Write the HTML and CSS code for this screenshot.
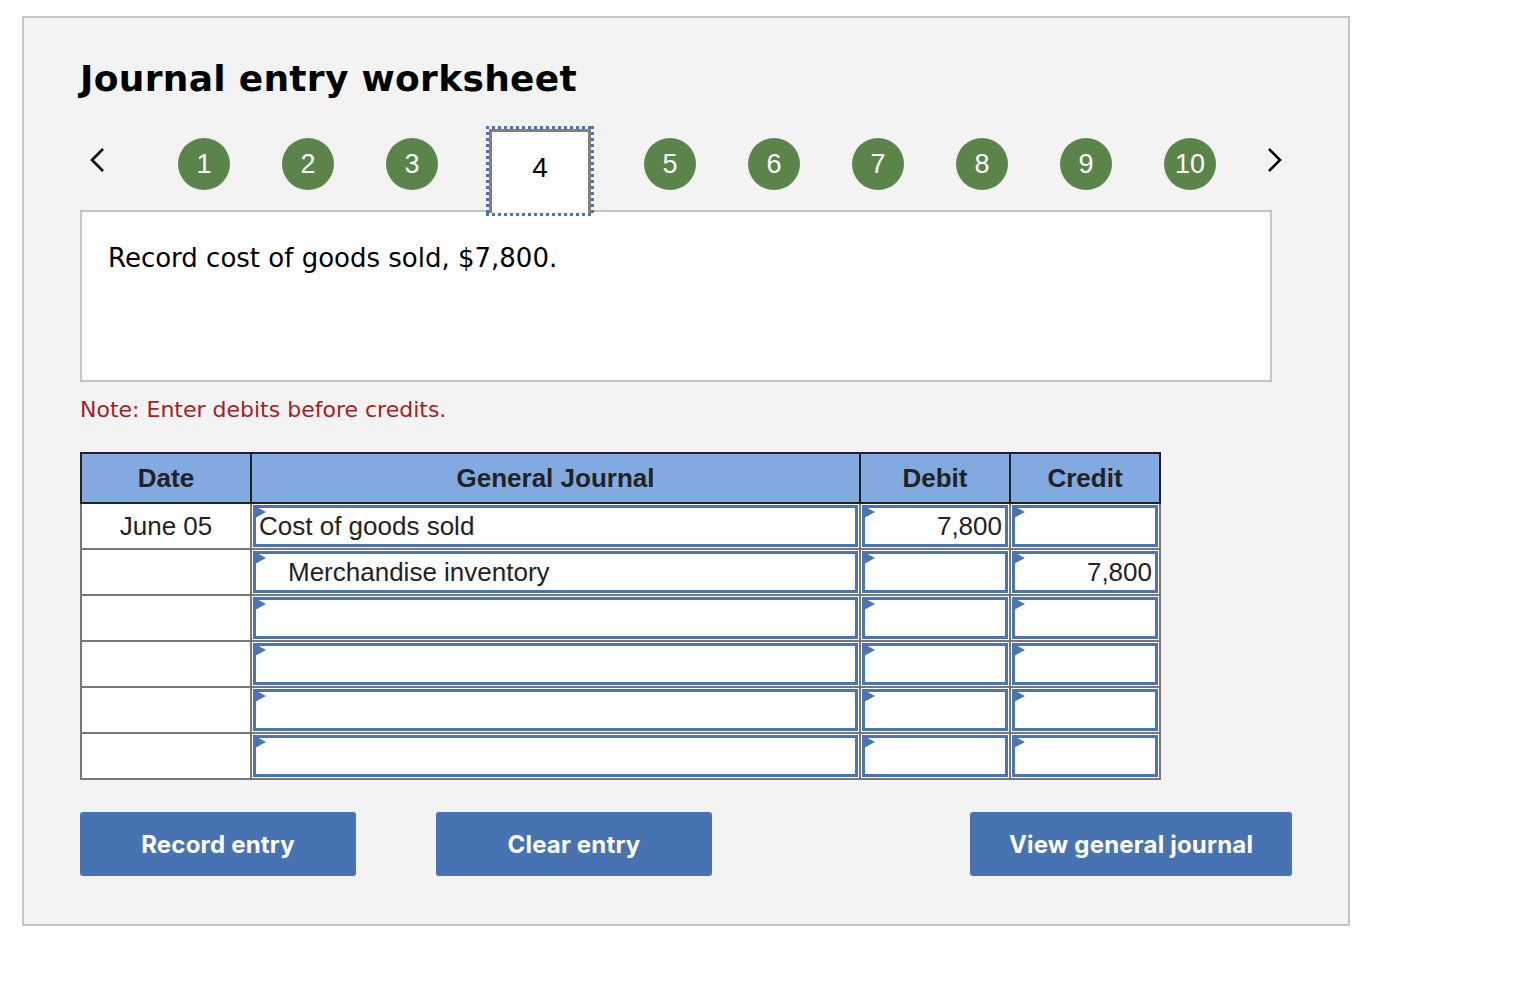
FILE: index.html
```html
<!DOCTYPE html>
<html>
<head>
<meta charset="utf-8">
<title>Journal entry worksheet</title>
<link rel="stylesheet" href="styles.css">
</head>
<body>
<div class="panel">
  <h1 class="title">Journal entry worksheet</h1>
  <div class="nav">
    <span class="chev chev-left"><svg width="18" height="26" viewBox="0 0 18 26"><path d="M15 2 L4 13 L15 24" fill="none" stroke="#000" stroke-width="2.6"/></svg></span>
    <span class="step">1</span>
    <span class="step">2</span>
    <span class="step step-before">3</span>
    <span class="step-current"><span class="step-inner">4</span></span>
    <span class="step">5</span>
    <span class="step">6</span>
    <span class="step">7</span>
    <span class="step">8</span>
    <span class="step">9</span>
    <span class="step step-last">10</span>
    <span class="chev chev-right"><svg width="18" height="26" viewBox="0 0 18 26"><path d="M3 2 L14 13 L3 24" fill="none" stroke="#000" stroke-width="2.6"/></svg></span>
  </div>
  <div class="question">Record cost of goods sold, $7,800.</div>
  <p class="note">Note: Enter debits before credits.</p>
  <table class="journal">
    <thead>
      <tr>
        <th class="c-date">Date</th>
        <th class="c-acct">General Journal</th>
        <th class="c-num">Debit</th>
        <th class="c-num">Credit</th>
      </tr>
    </thead>
    <tbody>
      <tr>
        <td class="date">June 05</td>
        <td><div class="field">Cost of goods sold</div></td>
        <td><div class="field num">7,800</div></td>
        <td><div class="field num"></div></td>
      </tr>
      <tr>
        <td class="date"></td>
        <td><div class="field indent">Merchandise inventory</div></td>
        <td><div class="field num"></div></td>
        <td><div class="field num">7,800</div></td>
      </tr>
      <tr>
        <td class="date"></td>
        <td><div class="field"></div></td>
        <td><div class="field num"></div></td>
        <td><div class="field num"></div></td>
      </tr>
      <tr>
        <td class="date"></td>
        <td><div class="field"></div></td>
        <td><div class="field num"></div></td>
        <td><div class="field num"></div></td>
      </tr>
      <tr>
        <td class="date"></td>
        <td><div class="field"></div></td>
        <td><div class="field num"></div></td>
        <td><div class="field num"></div></td>
      </tr>
      <tr>
        <td class="date"></td>
        <td><div class="field"></div></td>
        <td><div class="field num"></div></td>
        <td><div class="field num"></div></td>
      </tr>
    </tbody>
  </table>
  <div class="actions">
    <button class="btn btn-record">Record entry</button>
    <button class="btn btn-clear">Clear entry</button>
    <button class="btn btn-view">View general journal</button>
  </div>
</div>
</body>
</html>
```

FILE: styles.css
```css
html, body {
  margin: 0;
  padding: 0;
  background: #ffffff;
}

.panel {
  box-sizing: border-box;
  margin: 16px 0 0 22px;
  width: 1328px;
  height: 910px;
  border: 2px solid #c4c4c4;
  background: #f3f3f3;
  padding: 0 0 0 56px;
}

.title {
  margin: 38px 0 0 0;
  font-family: "DejaVu Sans", Verdana, sans-serif;
  font-weight: bold;
  font-size: 36px;
  line-height: 46px;
  color: #000;
  letter-spacing: 0.3px;
}

.nav {
  position: relative;
  z-index: 2;
  display: flex;
  align-items: flex-start;
  height: 90px;
  margin-top: 24px;
}

.chev {
  display: flex;
  align-items: center;
  justify-content: center;
  height: 26px;
  margin-top: 21px;
}

.chev-left {
  width: 34px;
  margin-right: 64px;
}

.chev-right {
  width: 34px;
  margin-left: 42px;
}

.step {
  display: flex;
  align-items: center;
  justify-content: center;
  width: 52px;
  height: 52px;
  margin-top: 12px;
  margin-right: 52px;
  border-radius: 50%;
  background: #5a8449;
  color: #fff;
  font-family: "Liberation Sans", Arial, sans-serif;
  font-size: 27px;
}

.step.step-before {
  margin-right: 48px;
}

.step.step-last {
  margin-right: 0;
}

.step-current {
  box-sizing: border-box;
  width: 108px;
  height: 90px;
  margin-right: 50px;
  padding: 3px;
  background-image:
    repeating-linear-gradient(90deg, #4a74b4 0 3px, transparent 3px 6px),
    repeating-linear-gradient(90deg, #4a74b4 0 3px, transparent 3px 6px),
    repeating-linear-gradient(180deg, #4a74b4 0 3px, transparent 3px 6px),
    repeating-linear-gradient(180deg, #4a74b4 0 3px, transparent 3px 6px);
  background-size: 100% 3px, 100% 3px, 3px 100%, 3px 100%;
  background-position: 0 0, 0 100%, 0 0, 100% 0;
  background-repeat: no-repeat;
}

.step-inner {
  box-sizing: border-box;
  display: flex;
  justify-content: center;
  height: 100%;
  padding-top: 20px;
  border: 3px solid #808080;
  border-bottom: none;
  background: #fff;
  color: #000;
  font-family: "Liberation Sans", Arial, sans-serif;
  font-size: 28px;
  line-height: 32px;
}

.question {
  position: relative;
  z-index: 1;
  box-sizing: border-box;
  width: 1192px;
  height: 172px;
  margin-top: -6px;
  padding: 29px 0 0 26px;
  border: 2px solid #c4c4c4;
  background: #fff;
  font-family: "DejaVu Sans", Verdana, sans-serif;
  font-size: 26px;
  line-height: 34px;
  color: #000;
}

.note {
  margin: 14px 0 0 0;
  font-family: "DejaVu Sans", Verdana, sans-serif;
  font-size: 22px;
  line-height: 28px;
  color: #a3221c;
}

.journal {
  margin-top: 28px;
  border-collapse: collapse;
  border: 2px solid #777;
  font-family: "Liberation Sans", Arial, sans-serif;
  font-size: 26px;
  color: #222;
  table-layout: fixed;
}

.journal th {
  height: 48px;
  padding: 0;
  background: #82aae0;
  border: 2px solid #222;
  font-weight: bold;
  text-align: center;
}

.c-date { width: 168px; }
.c-acct { width: 607px; }
.c-num { width: 148px; }

.journal td {
  height: 42px;
  padding: 1px;
  border: 2px solid #777;
  background: #fff;
}

.journal td.date {
  padding: 0;
  text-align: center;
}

.field {
  position: relative;
  box-sizing: border-box;
  height: 42px;
  border: 3px solid #4a74b4;
  background: #fff;
  padding: 0 3px;
  line-height: 36px;
  white-space: nowrap;
}

.field::before {
  content: "";
  position: absolute;
  left: -3px;
  top: -3px;
  width: 0;
  height: 0;
  border-left: 13px solid #4a74b4;
  border-top: 7px solid transparent;
  border-bottom: 7px solid transparent;
}

.field.num {
  text-align: right;
}

.field.indent {
  padding-left: 32px;
}

.actions {
  display: flex;
  margin-top: 32px;
  width: 1212px;
}

.btn {
  height: 64px;
  border: none;
  border-radius: 3px;
  background: #4873b3;
  color: #fff;
  font-family: Inter, "Liberation Sans", sans-serif;
  font-weight: bold;
  font-size: 24px;
  letter-spacing: 0.2px;
  padding: 0;
}

.btn-record { width: 276px; }
.btn-clear { width: 276px; margin-left: 80px; }
.btn-view { width: 322px; margin-left: auto; }
```
